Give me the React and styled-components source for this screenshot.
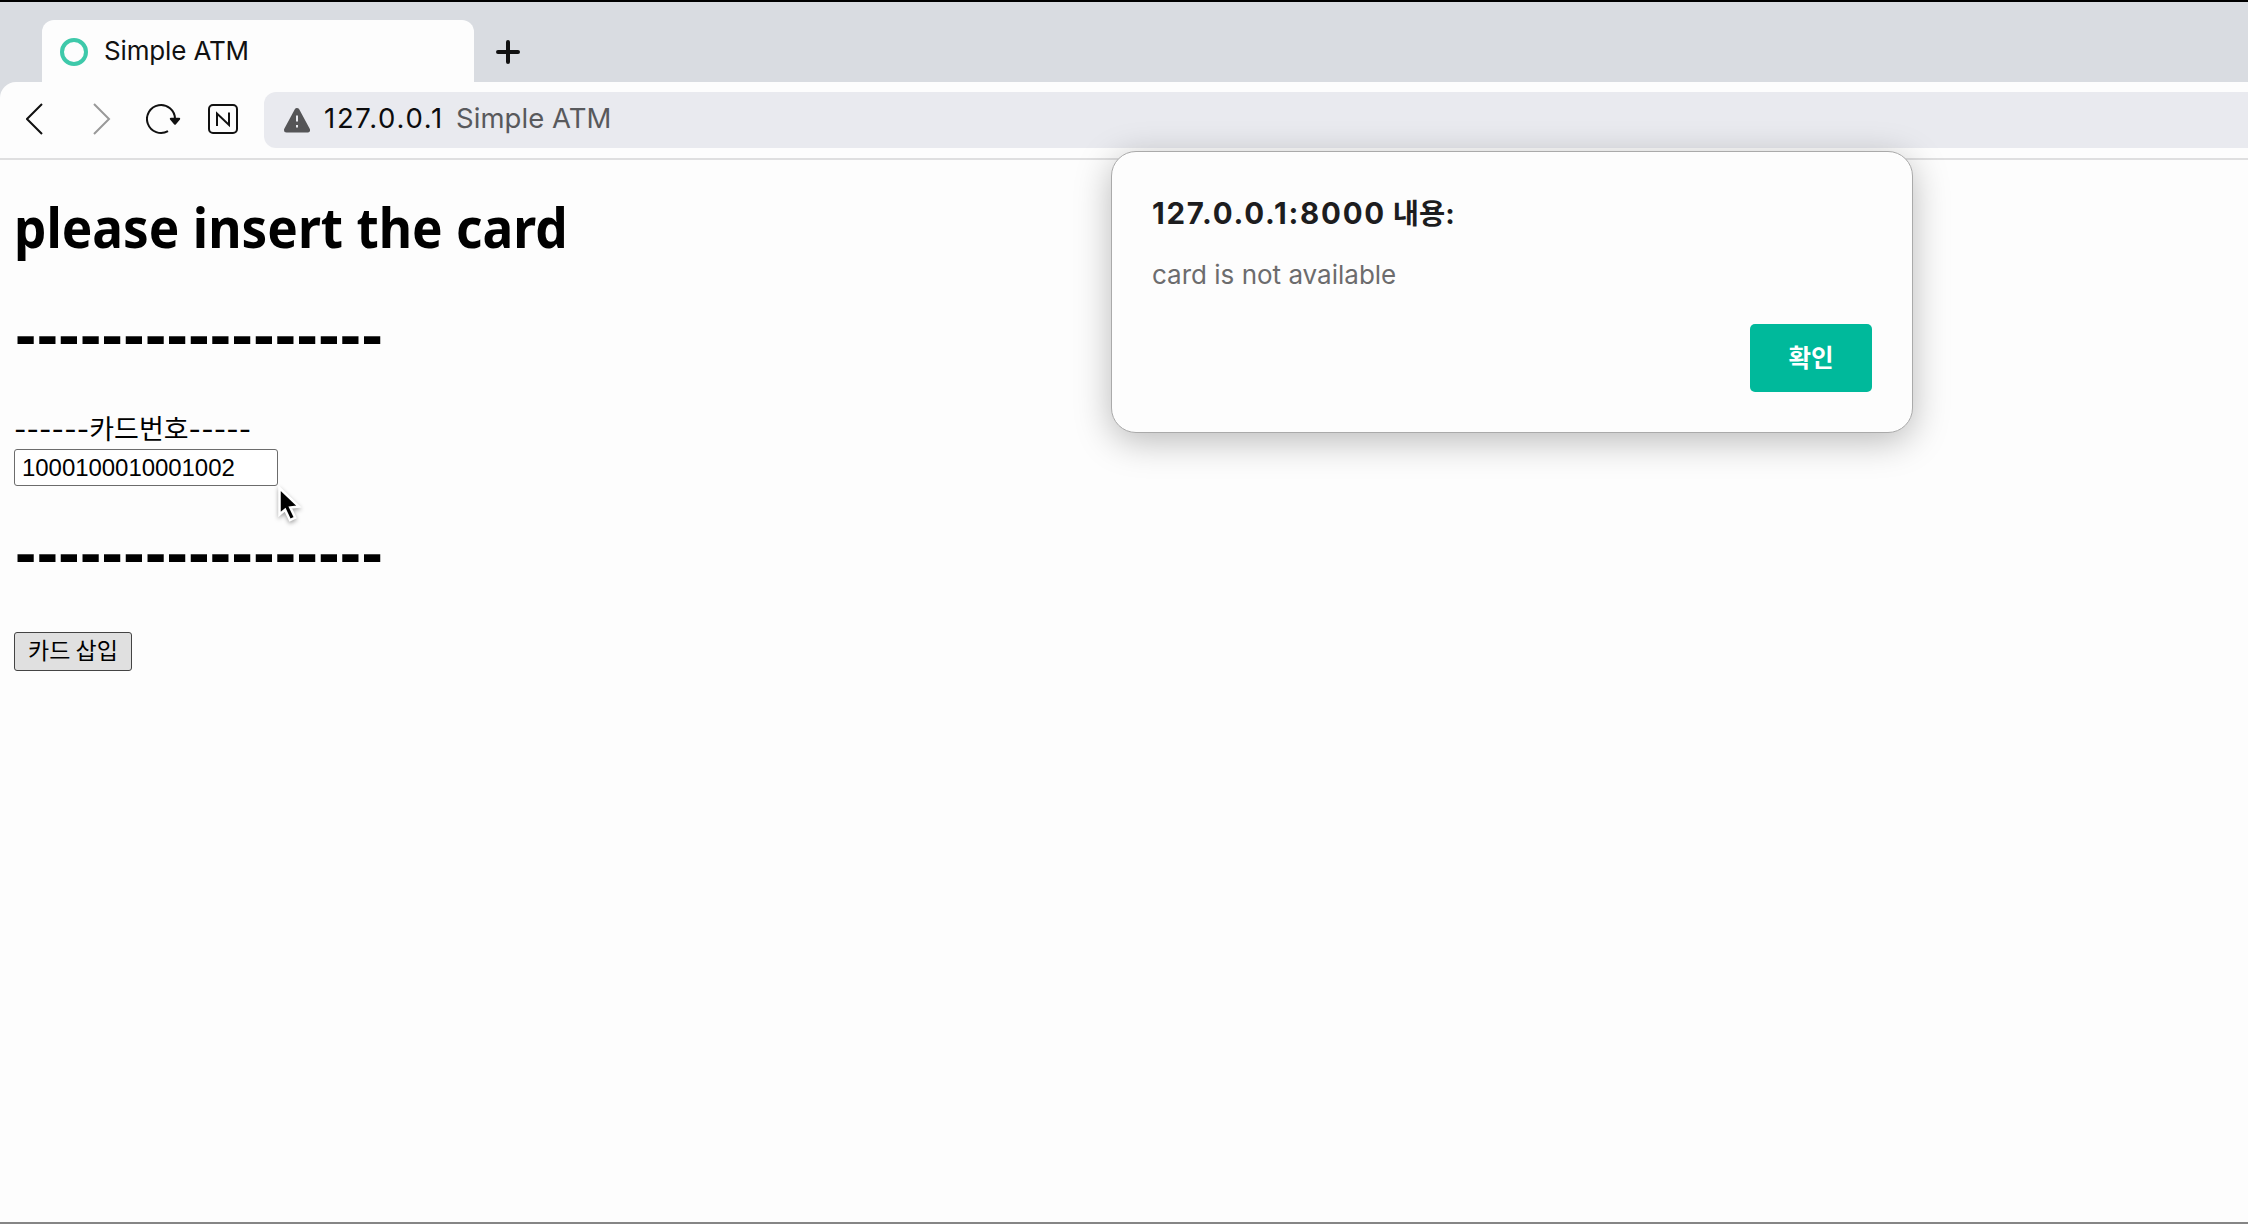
import React from "react";
import styled, { createGlobalStyle } from "styled-components";

const GlobalStyle = createGlobalStyle`
  * { box-sizing: border-box; }
  html, body { margin: 0; padding: 0; background: #fdfdfd; overflow: hidden; }
  body { font-family: Inter, "Noto Sans CJK KR", sans-serif; }
`;

const Window = styled.div`
  position: relative;
  display: flex;
  flex-direction: column;
  width: 2248px;
  height: 1224px;
  background: #fdfdfd;
  border-top: 2px solid #000;
  border-bottom: 2px solid #858585;
  overflow: hidden;
`;

const Chrome = styled.header`
  background: #d9dce1;
`;

const TabStrip = styled.div`
  display: flex;
  height: 80px;
  padding: 18px 0 0 42px;
`;

const Tab = styled.div`
  display: flex;
  align-items: center;
  width: 432px;
  height: 62px;
  padding: 0 18px;
  gap: 16px;
  border-radius: 12px 12px 0 0;
  background: #fdfdfd;
`;

const Favicon = styled.span`
  width: 28px;
  height: 28px;
  margin-top: 2px;
  border: 4px solid #3ec9aa;
  border-radius: 50%;
`;

const TabTitle = styled.span`
  font-size: 26px;
  line-height: 32px;
  letter-spacing: -0.15px;
  color: #111;
`;

const NewTab = styled.button`
  display: flex;
  width: 24px;
  height: 24px;
  margin: 20px 0 0 22px;
  padding: 0;
  border: 0;
  background: none;
`;

const Toolbar = styled.div`
  display: flex;
  align-items: center;
  height: 78px;
  padding-left: 26px;
  border-bottom: 2px solid #dfdfe0;
  border-radius: 16px 0 0 0;
  background: #fdfdfd;
`;

const ToolIcon = styled.svg`
  flex: none;
  width: ${(p) => p.$w}px;
  height: 32px;
  margin-right: ${(p) => p.$gap}px;
  margin-top: -2px;
  fill: none;
  stroke: ${(p) => p.$color || "#111"};
  stroke-width: 2;
`;

const AddressBar = styled.div`
  display: flex;
  flex: 1;
  align-items: center;
  height: 56px;
  padding-left: 20px;
  border-radius: 12px 0 0 12px;
  background: #e9eaef;
  font-size: 27.5px;
  line-height: 36px;
`;

const Warning = styled.svg`
  width: 26px;
  height: 26px;
  margin-right: 14px;
`;

const Host = styled.span`
  width: 132px;
  padding-bottom: 4px;
  letter-spacing: 1.7px;
  color: #0c0c0d;
  white-space: nowrap;
`;

const PageName = styled.span`
  padding-bottom: 4px;
  letter-spacing: 0.05px;
  color: #58595c;
`;

const Page = styled.main`
  display: flex;
  flex-direction: column;
  align-items: flex-start;
  padding: 24px 14px 0;
  color: #000;
`;

const Heading = styled.h1`
  height: 86px;
  margin: 0;
  font: 700 55px/86px "Noto Sans", sans-serif;
  white-space: nowrap;
  transform: scaleX(0.933);
  transform-origin: left center;
`;

const Dashes = styled.h1`
  height: 86px;
  margin: ${(p) => p.$top}px 0 0 1px;
  font: 700 64px/86px "Liberation Sans", Arial, sans-serif;
  letter-spacing: 0.34px;
  white-space: nowrap;
`;

const CardForm = styled.form`
  display: flex;
  flex-direction: column;
  align-items: flex-start;
`;

const Label = styled.label`
  height: 40px;
  margin-top: 31px;
  font: 400 27px/38px "Noto Sans CJK KR", sans-serif;
  white-space: nowrap;
`;

const DashRun = styled.span`
  font-family: Inter, sans-serif;
  letter-spacing: 0.12px;
`;

const CardInput = styled.input`
  width: 264px;
  height: 37px;
  padding: 0 7px;
  border: 1px solid #6c6c6c;
  border-radius: 3px;
  background: #fff;
  color: #000;
  font: 400 24px/33px "Liberation Sans", Arial, sans-serif;
  letter-spacing: -0.05px;
  outline: none;
`;

const InsertButton = styled.button`
  width: 118px;
  height: 39px;
  margin-top: 36px;
  padding: 0 0 6px;
  border: 1px solid #444;
  border-radius: 3px;
  background: #e0e0e0;
  color: #000;
  font: 400 23px/32px "Noto Sans CJK KR", sans-serif;
  white-space: nowrap;
`;

const Dialog = styled.section`
  position: absolute;
  top: 149px;
  left: 1111px;
  display: flex;
  flex-direction: column;
  width: 802px;
  height: 282px;
  padding: 41px 40px 40px;
  border: 1px solid #aaa;
  border-radius: 25px;
  background: #fdfdfd;
  box-shadow: 0 8px 36px rgba(0, 0, 0, 0.27);
`;

const DialogTitle = styled.h2`
  height: 40px;
  margin: 0;
  font: 700 29.5px/40px Inter, "Noto Sans CJK KR", sans-serif;
  letter-spacing: 1.75px;
  color: #1d1d1f;
`;

const Suffix = styled.span`
  font-size: 28.5px;
  letter-spacing: 0;
`;

const DialogMessage = styled.p`
  margin: 22px 0 0;
  font-size: 26px;
  line-height: 40px;
  color: #6c6c6d;
`;

const ConfirmButton = styled.button`
  align-self: flex-end;
  width: 122px;
  height: 68px;
  margin-top: auto;
  padding: 0 0 2px;
  border: 0;
  border-radius: 5px;
  background: #00b99b;
  color: #fff;
  font: 700 24.5px/40px "Noto Sans CJK KR", sans-serif;
`;

const Cursor = styled.svg`
  position: absolute;
  top: 481px;
  left: 275px;
  width: 30px;
  height: 42px;
  filter: drop-shadow(0 2px 2px rgba(0, 0, 0, 0.35));
`;

export default function App() {
  return (
    <Window>
      <GlobalStyle />
      <Chrome>
        <TabStrip>
          <Tab>
            <Favicon />
            <TabTitle>Simple ATM</TabTitle>
          </Tab>
          <NewTab aria-label="New tab">
            <svg width="24" height="24" viewBox="0 0 24 24">
              <path d="M12 2v20M2 12h20" stroke="#111" strokeWidth="4" strokeLinecap="round" />
            </svg>
          </NewTab>
        </TabStrip>
        <Toolbar>
          <ToolIcon $w={17} $gap={50} viewBox="0 0 17 32">
            <path d="M16 1L1 16l15 15" />
          </ToolIcon>
          <ToolIcon $w={18} $gap={35} $color="#999" viewBox="0 0 18 32">
            <path d="M1 1l15 15L1 31" />
          </ToolIcon>
          <ToolIcon $w={36} $gap={25} viewBox="0 0 36 32">
            <path d="M22 28.1A14 14 0 1 1 29 16" />
            <path d="M24.8 15.8h8.4L29 20.8z" fill="#111" strokeLinejoin="round" />
          </ToolIcon>
          <ToolIcon $w={32} $gap={25} viewBox="0 0 32 32">
            <rect x="2" y="2" width="28" height="28" rx="4" />
            <path d="M10 23V10.5L22 22V9.5" />
          </ToolIcon>
          <AddressBar>
            <Warning viewBox="0 0 26 26">
              <path
                d="M13 3.5L23.5 23H2.5z"
                fill="#555557"
                stroke="#555557"
                strokeWidth="5"
                strokeLinejoin="round"
              />
              <path d="M13 8.5v6M13 18v2.4" stroke="#e9eaef" strokeWidth="2" />
            </Warning>
            <Host>127.0.0.1</Host>
            <PageName>Simple ATM</PageName>
          </AddressBar>
        </Toolbar>
      </Chrome>

      <Page>
        <Heading>please insert the card</Heading>
        <Dashes $top={22}>-----------------</Dashes>
        <CardForm onSubmit={(e) => e.preventDefault()}>
          <Label htmlFor="card-number">
            <DashRun>------</DashRun>카드번호<DashRun>-----</DashRun>
          </Label>
          <CardInput id="card-number" defaultValue="1000100010001002" />
          <Dashes $top={24}>-----------------</Dashes>
          <InsertButton type="submit">카드 삽입</InsertButton>
        </CardForm>
      </Page>

      <Dialog role="alertdialog">
        <DialogTitle>
          127.0.0.1:8000<Suffix> 내용:</Suffix>
        </DialogTitle>
        <DialogMessage>card is not available</DialogMessage>
        <ConfirmButton>확인</ConfirmButton>
      </Dialog>

      <Cursor viewBox="0 0 30 42">
        <path
          d="M4.5 5v26.5l5.6-4.8 4.9 10.5 5.2-2.5-4.9-10.1 8.6-1.1z"
          fill="#000"
          stroke="#fff"
          strokeWidth="2.5"
        />
      </Cursor>
    </Window>
  );
}
